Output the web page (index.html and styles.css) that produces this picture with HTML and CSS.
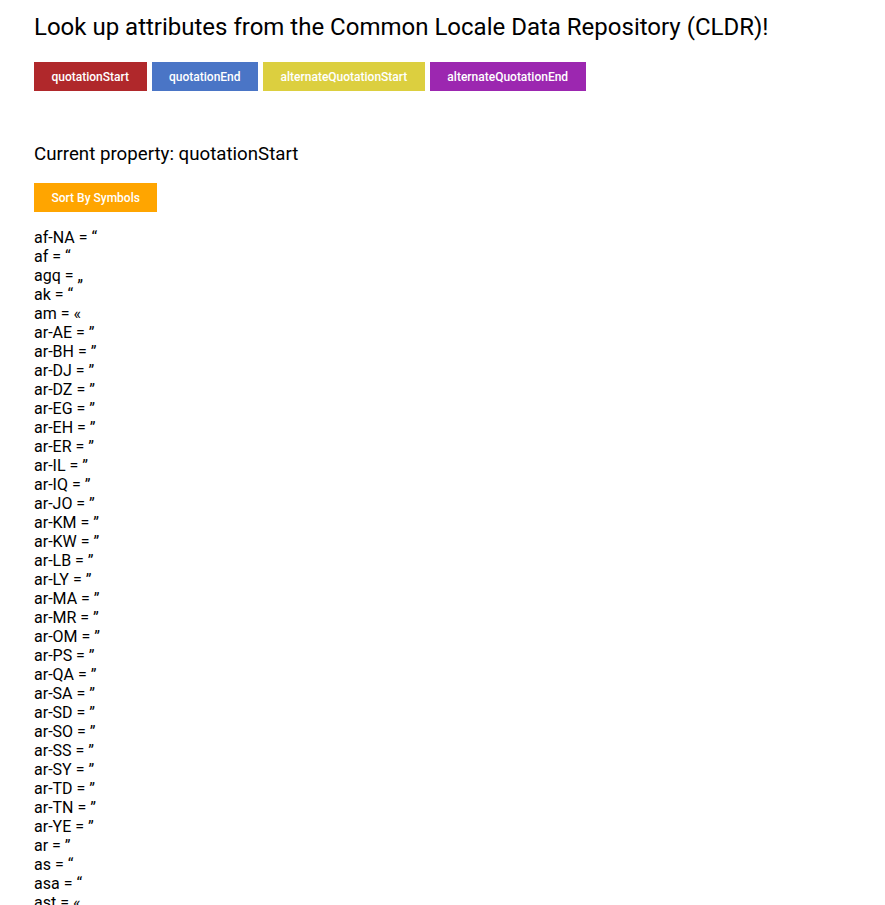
FILE: index.html
```html
<!DOCTYPE html>
<html>
<head>
<meta charset="utf-8">
<link rel="stylesheet" href="styles.css">
</head>
<body>
<div class="app">
  <h1 class="title">Look up attributes from the Common Locale Data Repository (CLDR)!</h1>
  <div class="buttons">
    <button class="btn red">quotationStart</button>
    <button class="btn blue">quotationEnd</button>
    <button class="btn yellow">alternateQuotationStart</button>
    <button class="btn purple">alternateQuotationEnd</button>
  </div>
  <h2 class="current">Current property: quotationStart</h2>
  <button class="btn orange sort">Sort By Symbols</button>
  <div class="list">
    <div>af-NA = “</div>
    <div>af = “</div>
    <div>agq = „</div>
    <div>ak = “</div>
    <div>am = «</div>
    <div>ar-AE = ”</div>
    <div>ar-BH = ”</div>
    <div>ar-DJ = ”</div>
    <div>ar-DZ = ”</div>
    <div>ar-EG = ”</div>
    <div>ar-EH = ”</div>
    <div>ar-ER = ”</div>
    <div>ar-IL = ”</div>
    <div>ar-IQ = ”</div>
    <div>ar-JO = ”</div>
    <div>ar-KM = ”</div>
    <div>ar-KW = ”</div>
    <div>ar-LB = ”</div>
    <div>ar-LY = ”</div>
    <div>ar-MA = ”</div>
    <div>ar-MR = ”</div>
    <div>ar-OM = ”</div>
    <div>ar-PS = ”</div>
    <div>ar-QA = ”</div>
    <div>ar-SA = ”</div>
    <div>ar-SD = ”</div>
    <div>ar-SO = ”</div>
    <div>ar-SS = ”</div>
    <div>ar-SY = ”</div>
    <div>ar-TD = ”</div>
    <div>ar-TN = ”</div>
    <div>ar-YE = ”</div>
    <div>ar = ”</div>
    <div>as = “</div>
    <div>asa = “</div>
    <div>ast = «</div>
    <div>az-Cyrl = «</div>
    <div>az = «</div>
    <div>bas = «</div>
  </div>
</div>
</body>
</html>
```

FILE: styles.css
```css
html, body {
  margin: 0;
  padding: 0;
  background: #fff;
}
body {
  font-family: Roboto, "Liberation Sans", sans-serif;
  color: #000;
}
.app {
  padding: 11px 34px;
}
.title {
  font-size: 24px;
  font-weight: 400;
  margin: 0 0 19px 0;
  line-height: 32px;
}
.buttons {
  display: flex;
  gap: 5px;
}
.btn {
  border: none;
  color: #fff;
  font-family: Roboto, "Liberation Sans", sans-serif;
  font-size: 12px;
  font-weight: 500;
  height: 29px;
  padding: 0 17.5px;
  cursor: pointer;
}
.red { background: #b0282b; }
.blue { background: #4a75c6; }
.yellow { background: #dccf3f; }
.purple { background: #9c27b0; }
.orange { background: #ffa500; }
.current {
  font-size: 18.7px;
  font-weight: 400;
  margin: 52px 0 18px 0;
  line-height: 22px;
}
.sort {
  display: block;
}
.list {
  margin-top: 16px;
  font-size: 16px;
  line-height: 19px;
}
```
